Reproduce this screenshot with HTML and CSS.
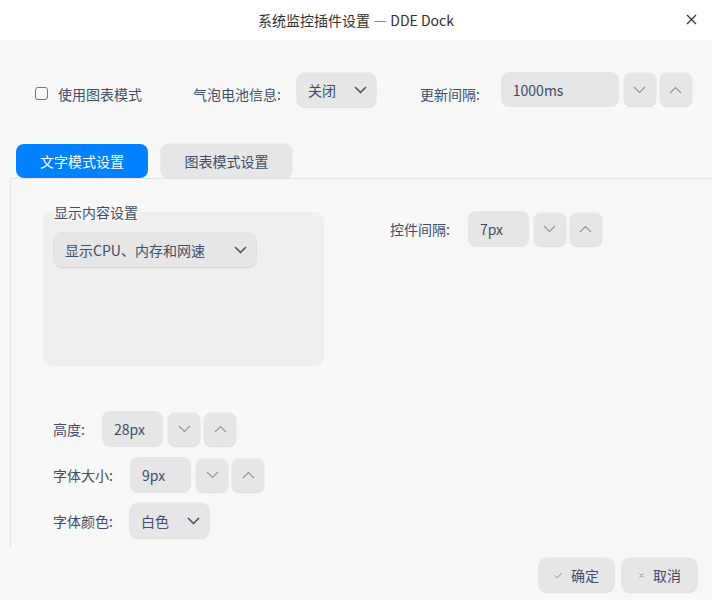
FILE: index.html
```html
<!DOCTYPE html>
<html lang="zh">
<head>
<meta charset="utf-8">
<title>系统监控插件设置 — DDE Dock</title>
<link rel="stylesheet" href="styles.css">
</head>
<body>
<div class="window">
  <header class="titlebar">
    <span class="title">系统监控插件设置 — DDE Dock</span>
    <button class="close" aria-label="关闭">
      <svg width="11" height="11" viewBox="0 0 11 11"><path d="M1 1L10 10M10 1L1 10" stroke="#303030" stroke-width="1.2" fill="none"/></svg>
    </button>
  </header>

  <div class="toprow">
    <label class="check"><span class="box"></span><span class="lbl">使用图表模式</span></label>
    <span class="lbl bubble-lbl">气泡电池信息:</span>
    <div class="combo combo-off"><span>关闭</span><svg class="chev dark" width="13" height="8" viewBox="0 0 13 8"><path d="M1 1L6.5 6.5L12 1" /></svg></div>
    <span class="lbl interval-lbl">更新间隔:</span>
    <div class="spin">
      <div class="field field-wide">1000ms</div>
      <div class="sbtn"><svg class="chev" width="13" height="8" viewBox="0 0 13 8"><path d="M1 1L6.5 6.5L12 1" /></svg></div>
      <div class="sbtn"><svg class="chev" width="13" height="8" viewBox="0 0 13 8"><path d="M1 7L6.5 1.5L12 7" /></svg></div>
    </div>
  </div>

  <nav class="tabs">
    <div class="tab active">文字模式设置</div>
    <div class="tab">图表模式设置</div>
  </nav>

  <section class="pane">
    <div class="upper">
      <div class="group">
        <span class="group-title">显示内容设置</span>
        <div class="combo combo-content"><span>显示CPU、内存和网速</span><svg class="chev dark" width="13" height="8" viewBox="0 0 13 8"><path d="M1 1L6.5 6.5L12 1" /></svg></div>
      </div>
      <div class="row gap-row">
        <span class="lbl">控件间隔:</span>
        <div class="spin">
          <div class="field">7px</div>
          <div class="sbtn"><svg class="chev" width="13" height="8" viewBox="0 0 13 8"><path d="M1 1L6.5 6.5L12 1" /></svg></div>
          <div class="sbtn"><svg class="chev" width="13" height="8" viewBox="0 0 13 8"><path d="M1 7L6.5 1.5L12 7" /></svg></div>
        </div>
      </div>
    </div>

    <div class="rows">
      <div class="row">
        <span class="lbl w-short">高度:</span>
        <div class="spin">
          <div class="field">28px</div>
          <div class="sbtn"><svg class="chev" width="13" height="8" viewBox="0 0 13 8"><path d="M1 1L6.5 6.5L12 1" /></svg></div>
          <div class="sbtn"><svg class="chev" width="13" height="8" viewBox="0 0 13 8"><path d="M1 7L6.5 1.5L12 7" /></svg></div>
        </div>
      </div>
      <div class="row">
        <span class="lbl w-long">字体大小:</span>
        <div class="spin">
          <div class="field">9px</div>
          <div class="sbtn"><svg class="chev" width="13" height="8" viewBox="0 0 13 8"><path d="M1 1L6.5 6.5L12 1" /></svg></div>
          <div class="sbtn"><svg class="chev" width="13" height="8" viewBox="0 0 13 8"><path d="M1 7L6.5 1.5L12 7" /></svg></div>
        </div>
      </div>
      <div class="row">
        <span class="lbl w-long">字体颜色:</span>
        <div class="combo combo-color"><span>白色</span><svg class="chev dark" width="13" height="8" viewBox="0 0 13 8"><path d="M1 1L6.5 6.5L12 1" /></svg></div>
      </div>
    </div>
  </section>

  <footer class="footer">
    <button class="btn"><svg width="9" height="7" viewBox="0 0 9 7"><path d="M1 3.5L3.3 6L8 1" stroke="#8b909c" stroke-width="1" fill="none"/></svg><span>确定</span></button>
    <button class="btn"><svg width="7" height="7" viewBox="0 0 7 7"><path d="M1.5 1.5L5.5 5.5M5.5 1.5L1.5 5.5" stroke="#8b909c" stroke-width="1" fill="none"/></svg><span>取消</span></button>
  </footer>
</div>
</body>
</html>
```

FILE: styles.css
```css
* { box-sizing: border-box; }
html, body { margin: 0; padding: 0; }
body {
  width: 712px;
  height: 600px;
  background: #f8f8f8;
  font-family: "Noto Sans CJK SC", "Noto Sans", sans-serif;
  font-size: 14px;
  color: #414d68;
  overflow: hidden;
}
.window { width: 712px; height: 600px; display: flex; flex-direction: column; }

.titlebar {
  height: 40px;
  background: #ffffff;
  display: flex;
  align-items: center;
  justify-content: center;
  position: relative;
}
.title { color: #303030; font-size: 14px; }
.close {
  position: absolute;
  right: 14px;
  top: 14px;
  width: 12px;
  height: 12px;
  border: 0;
  padding: 0;
  background: transparent;
  display: flex;
}

.lbl { white-space: nowrap; line-height: 20px; }

.toprow {
  display: flex;
  align-items: center;
  height: 35px;
  margin-top: 32px;
  padding-left: 35px;
}
.toprow > .lbl, .toprow > .check { margin-top: 8px; }
.check { display: flex; align-items: center; }
.box {
  width: 13px;
  height: 13px;
  border: 1.5px solid #6f7688;
  border-radius: 3px;
  margin-right: 10px;
}
.bubble-lbl { margin-left: 51px; }
.combo-off { margin-left: 16px; }
.interval-lbl { margin-left: 44px; }
.toprow .spin { margin-left: 21px; }

.combo {
  display: flex;
  align-items: center;
  justify-content: space-between;
  background: #e6e6e6;
  border-radius: 8px;
  box-shadow: 0 0 0 1px rgba(0,0,0,0.04), 0 1px 2px rgba(0,0,0,0.08);
  padding: 0 9px 0 11px;
}
.combo-off { width: 79px; height: 34px; }
.combo-content { width: 202px; height: 34px; }
.combo-color { width: 79px; height: 35px; }

.chev { fill: none; stroke: #8a90a0; stroke-width: 1.1; }
.chev.dark { stroke: #414d68; stroke-width: 1.5; }

.spin { display: flex; align-items: center; }
.field {
  width: 61px;
  height: 36px;
  background: #e6e6e6;
  border-radius: 8px;
  padding-left: 12px;
  display: flex;
  align-items: center;
}
.field-wide { width: 118px; height: 35px; }
.sbtn {
  width: 32px;
  height: 33px;
  background: #e6e6e6;
  border-radius: 7px;
  margin-left: 4px;
  display: flex;
  align-items: center;
  justify-content: center;
  box-shadow: 0 0 0 1px rgba(0,0,0,0.03), 0 1px 1px rgba(0,0,0,0.08);
}
.field + .sbtn { margin-left: 5px; }

.tabs {
  display: flex;
  gap: 13px;
  margin-top: 37px;
  padding-left: 16px;
  height: 34px;
}
.tab {
  width: 131px;
  height: 34px;
  border-radius: 8px;
  background: #e6e6e6;
  display: flex;
  align-items: center;
  justify-content: center;
  box-shadow: 0 0 0 1px rgba(0,0,0,0.04), 0 1px 2px rgba(0,0,0,0.06);
}
.tab.active {
  width: 132px;
  background: #0081ff;
  color: #ffffff;
  box-shadow: none;
}

.pane {
  margin-left: 10px;
  border-top: 1px solid #e3e3e3;
  border-left: 1px solid #e3e3e3;
  padding: 0 0 10px 32px;
}
.upper { display: flex; align-items: flex-start; margin-top: 33px; }
.group {
  position: relative;
  width: 281px;
  height: 154px;
  background: #efefef;
  border-radius: 9px;
  padding: 21px 0 0 11px;
}
.group-title {
  position: absolute;
  left: 10px;
  top: -9px;
  background: #f8f8f8;
  line-height: 18px;
  padding: 0 1px;
}
.gap-row { margin-left: 66px; margin-top: -1px; }
.gap-row .lbl { margin-right: 18px; }

.rows {
  display: flex;
  flex-direction: column;
  gap: 10px;
  margin-top: 45px;
  padding-left: 10px;
}
.row { display: flex; align-items: center; }
.w-short { width: 49px; }
.w-long { width: 77px; }

.footer {
  display: flex;
  justify-content: flex-end;
  gap: 8px;
  padding-right: 15px;
  margin-top: 10px;
}
.btn {
  width: 75px;
  height: 34px;
  background: #e6e6e6;
  border: 0;
  border-radius: 8px;
  font-family: inherit;
  font-size: 14px;
  color: #414d68;
  display: flex;
  align-items: center;
  justify-content: center;
  gap: 8px;
  box-shadow: 0 0 0 1px rgba(0,0,0,0.04), 0 1px 2px rgba(0,0,0,0.08);
  padding: 0;
}
```
